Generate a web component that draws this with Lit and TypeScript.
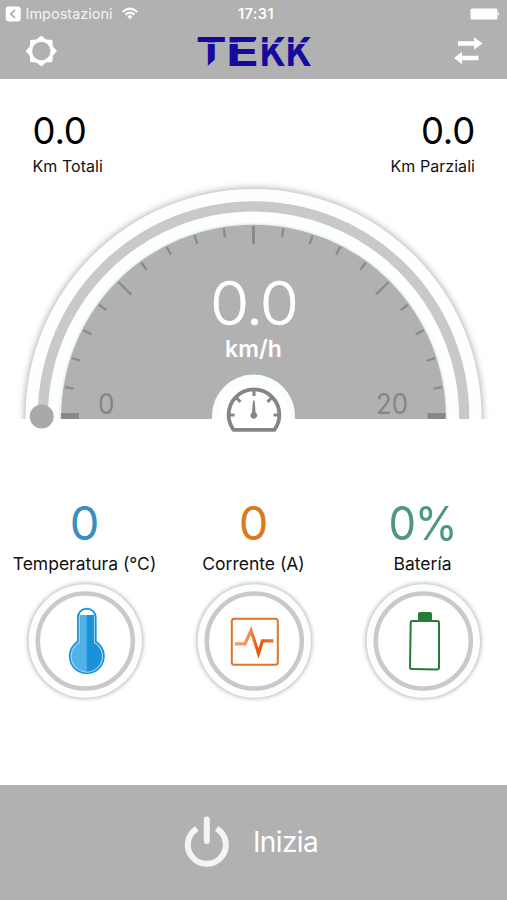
import { LitElement, html, css, svg } from "lit";
import { customElement, property } from "lit/decorators.js";

const RAD = Math.PI / 180;

@customElement("speed-gauge")
class SpeedGauge extends LitElement {
  static styles = css`
    :host { display: grid; height: 260px; flex: none; }
    svg, .readout { grid-area: 1 / 1; }
    svg { display: block; }
    text { font-family: Inter, "Liberation Sans", sans-serif; font-size: 28px; fill: #858585; }
    .readout { display: flex; flex-direction: column; align-items: center; padding-top: 98px; color: #fff; }
    .speed { font-size: 60.5px; line-height: 51px; height: 51px; font-weight: 300; transform: scaleX(1.05); -webkit-text-stroke: 0.5px #fff; letter-spacing: -2px; }
    .unit { font-size: 23px; line-height: 28px; margin-top: 6px; font-weight: 600; letter-spacing: 0.1px; }
  `;
  render() {
    const cx = 253.5, cy = 237;
    const ticks = [];
    for (let i = 1; i < 20; i++) {
      const a = (180 - i * 9) * RAD;
      const r1 = 191, r2 = i % 5 === 0 ? 173 : 182;
      ticks.push(svg`<line x1=${cx + r1 * Math.cos(a)} y1=${cy - r1 * Math.sin(a)}
        x2=${cx + r2 * Math.cos(a)} y2=${cy - r2 * Math.sin(a)}
        stroke="#8a8a8a" stroke-width=${i === 10 ? 3 : 2.3} />`);
    }
    return html`
      <svg width="507" height="260" viewBox="0 0 507 260">
        <defs>
          <clipPath id="half"><rect width="507" height="239" /></clipPath>
          <filter id="soft" x="-10%" y="-10%" width="120%" height="120%"><feGaussianBlur stdDeviation="3.2" /></filter>
          <filter id="tint" x="-10%" y="-10%" width="120%" height="120%"><feGaussianBlur stdDeviation="1.6" /></filter>
        </defs>
        <g clip-path="url(#half)">
          <circle cx=${cx} cy=${cy} r="229.5" fill="#b8b8b8" filter="url(#soft)" />
          <circle cx=${cx} cy=${cy} r="228" fill="#fdffff" />
          <circle cx=${cx} cy=${cy} r="210.7" fill="none" stroke="#cbc8c9" stroke-width="10.3" />
          <circle cx=${cx} cy=${cy} r="193" fill="#d5e6e6" filter="url(#tint)" />
          <circle cx=${cx} cy=${cy} r="192.3" fill="#b1b1b1" />
          ${ticks}
          <rect x="61" y="233" width="18" height="6" fill="#888" />
          <rect x="427.5" y="233" width="18" height="6" fill="#888" />
          <circle cx=${cx} cy="236" r="41.5" fill="#f8fdfd" />
          <circle cx=${cx} cy="237" r="36" fill="#fff" />
        </g>
        <circle cx="41.7" cy="236.5" r="12" fill="#aaa8a9" />
        <g stroke="#858585" fill="none" stroke-width="3.8">
          <path d="M233.5 249.8Q228.6 243 228.6 234.8A25.4 25.4 0 0 1 279.4 234.8Q279.4 243 274.5 249.8Z" stroke-linejoin="round" />
          <path stroke-width="3" d="M230 235h4.5M278 235h-4.5M254 211v5M236.5 218l4 3.8M271.5 218l-4 3.8" />
        </g>
        <path d="M253 220.5h1.6l1 12a3.4 3.4 0 1 1-3.6 0z" fill="#858585" />
        <text x="98" y="234" textLength="16.5" lengthAdjust="spacingAndGlyphs">0</text>
        <text x="376" y="234" textLength="32" lengthAdjust="spacingAndGlyphs">20</text>
      </svg>
      <div class="readout">
        <div class="speed">0.0</div>
        <div class="unit">km/h</div>
      </div>`;
  }
}

@customElement("metric-card")
class MetricCard extends LitElement {
  @property() value = "";
  @property() label = "";
  @property({ attribute: false }) icon: unknown;

  static styles = css`
    :host { display: flex; flex-direction: column; align-items: center; }
    .value { font-size: 47px; line-height: 48px; height: 48px; letter-spacing: var(--value-spacing, 0); transform: scaleX(var(--value-stretch, 1)); }
    .label { font-size: 17.5px; line-height: 24px; color: #111; white-space: nowrap; margin-top: 5px; }
    svg { display: block; }
  `;
  render() {
    return html`
      <div class="value">${this.value}</div>
      <div class="label">${this.label}</div>
      <svg width="130" height="130" viewBox="0 0 130 130">
        <defs><filter id="s" x="-20%" y="-20%" width="140%" height="140%"><feGaussianBlur stdDeviation="2.2" /></filter></defs>
        <circle cx="65.3" cy="65" r="57.7" fill="#b2b6b6" filter="url(#s)" />
        <circle cx="65.3" cy="65" r="56.7" fill="#fbfefe" />
        <circle cx="65.3" cy="65" r="47.5" fill="#fff" stroke="#cbc8c9" stroke-width="4.6" />
        ${this.icon}
      </svg>`;
  }
}

const thermo = svg`
  <g transform="translate(-20 -576)">
    <path d="M77 617.5a9.8 9.8 0 0 1 19.6 0V641a18 18 0 1 1-19.6 0Z" fill="#1b91d6" />
    <path d="M78.7 617.5a8.1 8.1 0 0 1 16.2 0V642.2a16.3 16.3 0 1 1-16.2 0Z" fill="#a5daf5" />
    <path d="M79.8 615h14V643a15.2 15.2 0 1 1-14 0Z" fill="#52b1e5" />
    <path d="M86.8 615h7V643a15.2 15.2 0 0 1-7 28.6Z" fill="#1992da" />
    <path d="M79.8 615a7 5 0 0 1 14 0Z" fill="#fff" />
  </g>`;
const pulse = svg`
  <defs><linearGradient id="o" x1="235" x2="273" y1="0" y2="0" gradientUnits="userSpaceOnUse">
    <stop offset="0" stop-color="#eea36d" /><stop offset=".4" stop-color="#ed8f52" /><stop offset=".6" stop-color="#e4590d" /><stop offset="1" stop-color="#e97529" /></linearGradient></defs>
  <g transform="translate(-189 -576)">
    <rect x="231.8" y="618.8" width="46" height="46" rx="2.5" fill="#fff" stroke="#e27429" stroke-width="2" />
    <path d="M234.7 643.8H245L251 630.5L258.5 653.5L262.5 640.8H273.5" fill="none" stroke="url(#o)" stroke-width="3.2" />
  </g>`;
const battery = svg`
  <g transform="translate(-358 -576)">
    <rect x="418" y="612" width="14" height="10" rx="2" fill="#267d37" />
    <path d="M412 621H437.5Q439 621 439 623V667.5Q439 669.5 437 669.5L411.5 669Q410 669 410 667L410.7 622.5Q410.7 621 412 621Z" fill="#fff" stroke="#267d37" stroke-width="2" />
  </g>`;

@customElement("app-root")
class AppRoot extends LitElement {
  static styles = css`
    :host { display: flex; flex-direction: column; width: 507px; height: 900px; background: #fff; overflow: hidden;
      font-family: Inter, "Liberation Sans", sans-serif; color: #111; }
    svg { display: block; flex: none; }
    header { height: 79px; background: #b1b1b1; flex: none; color: #fff; }
    .status { display: grid; grid-template-columns: 1fr auto 1fr; align-items: center; height: 27px; padding: 0 8px 0 5px; font-size: 14.5px; line-height: 20px; }
    .back { display: flex; align-items: center; color: #f2f2f2; }
    .back span { margin: 0 9px 0 4.5px; }
    .time { font-weight: 600; letter-spacing: 0.4px; margin-left: 8px; }
    .charge { justify-self: end; }
    nav { display: flex; justify-content: space-between; align-items: center; height: 48px; padding: 0 24px 0 25px; }
    .logo { font-family: Inter, sans-serif; font-size: 40px; font-weight: 700; }
    .totals { display: flex; justify-content: space-between; height: 101px; box-sizing: border-box; padding: 31px 32px 0 32.5px; flex: none; }
    .right { text-align: right; }
    .big { font-size: 36.5px; line-height: 42px; color: #000; letter-spacing: -0.2px; }
    .small { font-size: 16px; line-height: 22px; margin-top: 3px; letter-spacing: 0.05px; }
    .cards { display: grid; grid-template-columns: repeat(3, 1fr); height: 345px; box-sizing: border-box; padding-top: 59px; flex: none; }
    .cool { color: #3a8fbe; }
    .warm { color: #d97a20; }
    .green { color: #4d987f; --value-spacing: -1.5px; --value-stretch: 0.93; }
    footer { height: 115px; background: #b1b1b1; flex: none; display: flex; align-items: center; justify-content: center; gap: 22px; color: #fff;
      font-size: 28px; letter-spacing: -0.6px; box-sizing: border-box; padding: 0 6px 1.5px 0; }
  `;

  render() {
    const star = Array.from({ length: 16 }, (_, i) => {
      const r = i % 2 ? 12.5 : 15.6;
      return `${16.3 + r * Math.sin(i * 22.5 * RAD)},${16 - r * Math.cos(i * 22.5 * RAD)}`;
    }).join(" ");
    return html`
      <header>
        <div class="status">
          <div class="back">
            <svg width="16" height="16" viewBox="5 5.5 16 16">
              <rect x="5.7" y="6" width="15" height="15" rx="3" fill="#fff" />
              <path d="M15 9.5L10.8 13.5L15 17.5" fill="none" stroke="#a5a5a5" stroke-width="1.7" />
            </svg>
            <span>Impostazioni</span>
            <svg width="16" height="14" viewBox="121.7 6.5 16 14">
              <path d="M122.5 11.5Q129.7 4.7 137 11.5M125.2 14.2Q129.7 10 134.2 14.2" fill="none" stroke="#fff" stroke-width="2" />
              <path d="M127 16Q129.7 13.5 132.4 16L129.7 18.8Z" fill="#fff" />
            </svg>
          </div>
          <div class="time">17:31</div>
          <svg class="charge" width="29" height="12" viewBox="470 7.5 29 12">
            <rect x="470.5" y="8" width="27" height="11" rx="1.5" fill="#fff" /><path d="M498 11.5q2 2 0 4z" fill="#fff" />
          </svg>
        </div>
        <nav>
          <svg width="32" height="32" viewBox="0 0 32 32">
            <polygon points=${star} fill="#fff" />
            <circle cx="16.3" cy="16" r="9.2" fill="#b1b1b1" />
          </svg>
          <svg class="logo" width="124" height="50" viewBox="193 27.5 124 50">
            <text y="67" fill="#150c9e"><tspan x="196" textLength="30.5" lengthAdjust="spacingAndGlyphs">T</tspan><tspan x="226" textLength="33" lengthAdjust="spacingAndGlyphs">E</tspan><tspan x="259.8" textLength="26" lengthAdjust="spacingAndGlyphs">K</tspan><tspan x="285.8" textLength="26" lengthAdjust="spacingAndGlyphs">K</tspan></text>
            <path d="M196 44.7H314" stroke="#b1b1b1" stroke-width="1.5" />
            <path d="M207 68L216 60V68ZM259.5 37V44L253.5 44Z" fill="#b1b1b1" />
          </svg>
          <svg width="30" height="30" viewBox="453 36 30 30">
            <path d="M458 41.2H474V37.2L482.500 43.5L474 49.7V45.7H458Z M478.5 55.8H462V51.7L454 58L462 64.2V60.3H478.5Z" fill="#fff" />
          </svg>
        </nav>
      </header>
      <section class="totals">
        <div><div class="big">0.0</div><div class="small">Km Totali</div></div>
        <div class="right"><div class="big">0.0</div><div class="small">Km Parziali</div></div>
      </section>
      <speed-gauge></speed-gauge>
      <section class="cards">
        <metric-card class="cool" value="0" label="Temperatura (°C)" .icon=${thermo}></metric-card>
        <metric-card class="warm" value="0" label="Corrente (A)" .icon=${pulse}></metric-card>
        <metric-card class="green" value="0%" label="Batería" .icon=${battery}></metric-card>
      </section>
      <footer>
        <svg width="48" height="56" viewBox="183 814 48 56">
          <path d="M197 828.5A19 19 0 1 0 216.6 828.5" fill="none" stroke="#f4f4f4" stroke-width="6" />
          <path d="M206.8 819.5V841" stroke="#f4f4f4" stroke-width="6" stroke-linecap="round" />
        </svg>
        <span>Inizia</span>
      </footer>`;
  }
}
